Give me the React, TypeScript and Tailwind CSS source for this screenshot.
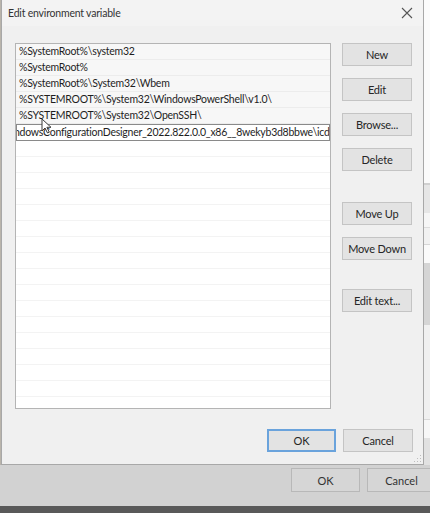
const paths = [
  "%SystemRoot%\\system32",
  "%SystemRoot%",
  "%SystemRoot%\\System32\\Wbem",
  "%SYSTEMROOT%\\System32\\WindowsPowerShell\\v1.0\\",
  "%SYSTEMROOT%\\System32\\OpenSSH\\",
];

const font = { fontFamily: 'Lato, "Noto Sans", "Liberation Sans", sans-serif' };

const WinButton = ({ label, className = "" }: { label: string; className?: string }) => (
  <div
    className={`flex h-[23px] w-[70px] shrink-0 items-center justify-center border border-[#c4c4c4] bg-[#e3e3e3] text-[11px] tracking-[-0.2px] text-[#262626] ${className}`}
  >
    {label}
  </div>
);

const Cursor = () => (
  <svg
    className="absolute left-[39px] top-[118px]"
    width="11"
    height="16"
    viewBox="0 0 11 16"
  >
    <path
      d="M1 1 L1 13 L4 10 L6.5 15 L8.3 14.2 L5.9 9.3 L10 9.3 Z"
      fill="#ffffff"
      stroke="#3a3a3a"
      strokeWidth="1"
      strokeLinejoin="round"
    />
  </svg>
);

export default function App() {
  return (
    <div
      className="relative flex h-[513px] w-[430px] flex-col overflow-hidden bg-[#595959] leading-none"
      style={font}
    >
      <div className="flex h-[465px] shrink-0">
        {/* sliver of the window behind, left */}
        <div className="w-[1px] bg-[#b9b4ab]" />

        {/* dialog */}
        <div className="relative flex w-[423px] flex-col border-r border-b border-l border-[#a8a8a8] bg-[#f0f0f0]">
          <div className="flex h-[26px] shrink-0 items-center justify-between bg-[#f3f3f3] pl-[6px] pr-[10px]">
            <span className="text-[10.5px] tracking-[-0.2px] text-[#333]">Edit environment variable</span>
            <svg width="12" height="12" viewBox="0 0 12 12">
              <path d="M1 1 L11 11 M11 1 L1 11" stroke="#555" strokeWidth="1.1" />
            </svg>
          </div>

          <div className="flex flex-1 flex-col pl-[13px] pr-[10px] pt-[17px]">
            <div className="flex gap-[11px]">
              {/* list box */}
              <div className="flex h-[366px] w-[316px] shrink-0 flex-col overflow-hidden border border-[#b4b4b4] bg-white text-[10.5px] tracking-[-0.25px] text-[#1e1e1e]">
                {paths.map((p) => (
                  <div
                    key={p}
                    className="flex h-[16px] shrink-0 items-center border-b border-[#ececec] bg-[#f7f7f7] pl-[3px] whitespace-nowrap"
                  >
                    {p}
                  </div>
                ))}
                <div className="flex h-[17px] shrink-0 items-center overflow-hidden border border-[#8a8a8a] bg-white whitespace-nowrap">
                  <span className="-ml-[3px]">
                    ndowsConfigurationDesigner_2022.822.0.0_x86__8wekyb3d8bbwe\icd
                  </span>
                </div>
                {Array.from({ length: 20 }).map((_, i) => (
                  <div key={i} className="h-[16px] shrink-0 border-b border-[#f3f3f3]" />
                ))}
              </div>

              {/* button column */}
              <div className="flex flex-col">
                <WinButton label="New" />
                <WinButton label="Edit" className="mt-[12px]" />
                <WinButton label="Browse..." className="mt-[12px]" />
                <WinButton label="Delete" className="mt-[12px]" />
                <WinButton label="Move Up" className="mt-[31px]" />
                <WinButton label="Move Down" className="mt-[12px]" />
                <WinButton label="Edit text..." className="mt-[29px]" />
              </div>
            </div>

            <div className="mt-[20px] flex justify-end gap-[7px]">
              <div className="flex h-[23px] w-[69px] items-center justify-center border-2 border-[#6aa3dc] bg-[#e3e3e3] text-[11px] text-[#262626]">
                OK
              </div>
              <WinButton label="Cancel" />
            </div>
          </div>

          {/* resize grip */}
          <svg className="absolute bottom-[1px] right-[1px]" width="8" height="8" viewBox="0 0 8 8">
            <rect x="6" y="0" width="1" height="1" fill="#bdbdbd" />
            <rect x="3" y="3" width="1" height="1" fill="#bdbdbd" />
            <rect x="6" y="3" width="1" height="1" fill="#bdbdbd" />
            <rect x="0" y="6" width="1" height="1" fill="#bdbdbd" />
            <rect x="3" y="6" width="1" height="1" fill="#bdbdbd" />
            <rect x="6" y="6" width="1" height="1" fill="#bdbdbd" />
          </svg>

          <Cursor />
        </div>

        {/* sliver of the window behind, right */}
        <div className="flex flex-1 flex-col">
          <div className="h-[183px] bg-[#fbfbfb]" />
          <div className="h-[2px] bg-[#d0d0d0]" />
          <div className="h-[28px] bg-[#e6e6e6]" />
          <div className="h-[15px] border-b border-[#dcdcdc] bg-[#f6f6f6]" />
          <div className="h-[17px] border-b border-[#d6d6d6] bg-[#f1f1f1]" />
          <div className="h-[18px] bg-[#fafafa]" />
          <div className="h-[62px] bg-[#d5d5d5]" />
          <div className="h-[95px] border-b border-[#d8d8d8] bg-[#f0f0f0]" />
          <div className="h-[18px] bg-[#f7f7f7]" />
          <div className="flex-1 bg-[#e1e1e1]" />
        </div>
      </div>

      {/* bottom of the window behind */}
      <div className="flex h-[41px] shrink-0 justify-end gap-[7px] bg-[#d2d2d2] pt-[3px]">
        <div className="flex h-[24px] w-[69px] items-center justify-center border border-[#b8b8b8] bg-[#d6d6d6] text-[11px] text-[#333]">
          OK
        </div>
        <div className="-mr-[6px] flex h-[24px] w-[69px] items-center justify-center border border-[#b8b8b8] bg-[#d6d6d6] text-[11px] text-[#333]">
          Cancel
        </div>
      </div>
      <div className="h-[7px] shrink-0 bg-[#595959]" />
    </div>
  );
}
